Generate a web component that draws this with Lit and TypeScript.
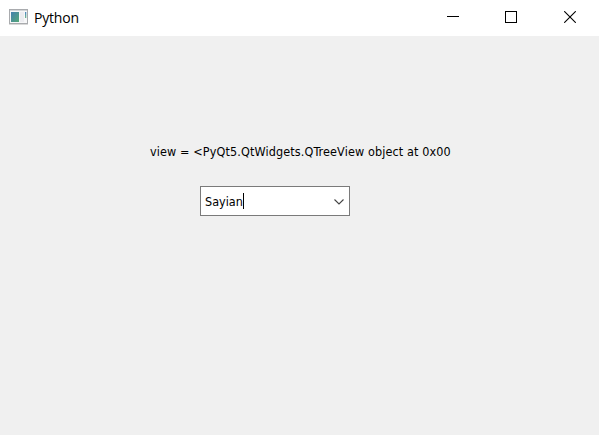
import { LitElement, html, css } from "lit";
import { customElement } from "lit/decorators.js";

@customElement("title-bar")
class TitleBar extends LitElement {
  static styles = css`
    :host { display: flex; height: 36px; background: #fff; color: #000; }
    svg { display: block; }
    .icon { margin: 9px 0 0 9px; width: 19px; height: 16px; }
    .title { flex: 1; margin-left: 6px; font: 14px/35px "Open Sans", "Noto Sans", sans-serif; letter-spacing: -0.2px; white-space: nowrap; }
    .controls { display: flex; gap: 46px; padding-right: 23px; }
    .controls svg { width: 12px; height: 12px; margin: 11px 0 0; }
    .controls svg.close { margin-left: 1px; }
  `;
  render() {
    return html`
      <svg class="icon" viewBox="0 0 19 16">
        <defs>
          <linearGradient id="g" x1="0" y1="0" x2="1" y2="1">
            <stop offset="0" stop-color="#447fae" />
            <stop offset="1" stop-color="#55a878" />
          </linearGradient>
          <linearGradient id="h" x1="0" y1="0" x2="0" y2="1">
            <stop offset="0" stop-color="#4f84c4" />
            <stop offset="1" stop-color="#6fb98c" />
          </linearGradient>
        </defs>
        <rect x="0.5" y="0.5" width="18" height="14" fill="#f7f7f8" stroke="#a9abae" />
        <rect x="0" y="15" width="19" height="1" fill="#d9d9d9" />
        <rect x="1" y="1" width="17" height="1" fill="#d3d5d8" />
        <rect x="2" y="3" width="8" height="10" fill="url(#g)" />
        <rect x="11" y="3" width="4" height="10" fill="#ececf0" />
        <rect x="16" y="3" width="1.3" height="6" fill="url(#h)" />
      </svg>
      <span class="title">Python</span>
      <div class="controls">
        <svg viewBox="0 0 12 12"><path d="M0 5.5H12" stroke="#000" /></svg>
        <svg viewBox="0 0 12 12"><rect x=".5" y=".5" width="11" height="11" fill="none" stroke="#000" /></svg>
        <svg class="close" viewBox="0 0 12 12"><path d="M.2 .2L11.8 11.8M11.8 .2L.2 11.8" stroke="#000" stroke-width="1.1" /></svg>
      </div>
    `;
  }
}

@customElement("combo-box")
class ComboBox extends LitElement {
  static styles = css`
    :host { box-sizing: border-box; display: flex; width: 150px; height: 30px; border: 1px solid #7a7a7a; background: #fff; padding: 0 5px 0 4px; }
    .value { font: 12.5px/29px "DejaVu Sans Condensed", "DejaVu Sans", sans-serif; font-stretch: condensed; width: 38px; white-space: nowrap; letter-spacing: 0; }
    .caret { width: 1px; height: 16px; margin-top: 6px; background: #000; }
    .arrow { display: block; width: 10px; height: 6px; margin: 12px 0 0 auto; }
  `;
  render() {
    return html`
      <span class="value">Sayian</span>
      <span class="caret"></span>
      <svg class="arrow" viewBox="0 0 10 6"><path d="M.5 .5L5 5L9.5 .5" fill="none" stroke="#444" stroke-width="1.1" /></svg>
    `;
  }
}

@customElement("app-root")
class AppRoot extends LitElement {
  static styles = css`
    :host { display: flex; flex-direction: column; height: 435px; background: #f0f0f0; color: #000; overflow: hidden; }
    .client { display: flex; flex-direction: column; padding: 100px 0 0 150px; }
    .label { height: 30px; width: 304px; margin-bottom: 20px; font: 12.5px/32px "DejaVu Sans Condensed", "DejaVu Sans", sans-serif; font-stretch: condensed; white-space: nowrap; letter-spacing: 0.12px; }
    .combo { margin-left: 50px; }
  `;
  render() {
    return html`
      <title-bar></title-bar>
      <main class="client">
        <span class="label">view = &lt;PyQt5.QtWidgets.QTreeView object at 0x00</span>
        <combo-box class="combo"></combo-box>
      </main>
    `;
  }
}
